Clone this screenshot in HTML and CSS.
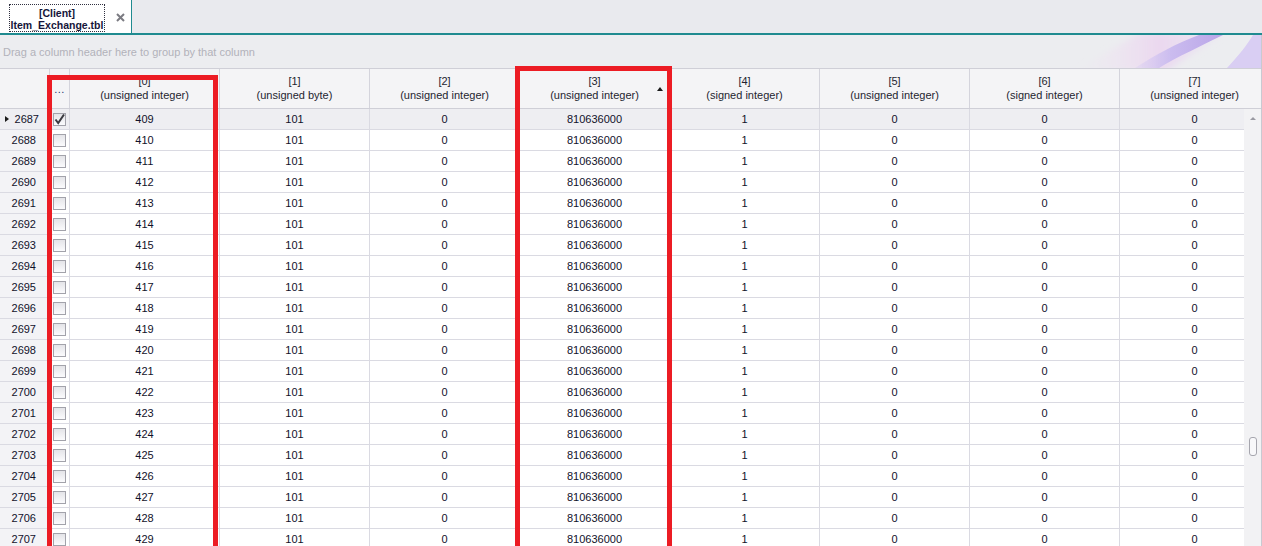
FILE: index.html
```html
<!doctype html>
<html>
<head>
<meta charset="utf-8">
<link rel="stylesheet" href="styles.css">
<title>[Client] Item_Exchange.tbl</title>
</head>
<body>
<div class="tabs">
  <div class="tab">
    <div class="tab-label">[Client]<br>Item_Exchange.tbl</div>
    <svg class="tab-close" width="9" height="9" viewBox="0 0 9 9"><path d="M1 1L8 8M8 1L1 8" stroke="#7b7b82" stroke-width="2"/></svg>
  </div>
</div>

<div class="main">
  <div class="group-panel">
    <span class="group-hint">Drag a column header here to group by that column</span>
    <svg class="swoosh" width="220" height="33" viewBox="0 0 220 33">
      <defs>
        <linearGradient id="pink" x1="0" y1="0" x2="1" y2="0">
          <stop offset="0" stop-color="#f0e6f2" stop-opacity="0"/>
          <stop offset="0.55" stop-color="#ebd8ef"/>
          <stop offset="1" stop-color="#e8dcf3" stop-opacity="0.3"/>
        </linearGradient>
        <linearGradient id="violet" x1="0" y1="0" x2="1" y2="0">
          <stop offset="0" stop-color="#d8ccf3" stop-opacity="0.3"/>
          <stop offset="0.4" stop-color="#cbbcef"/>
          <stop offset="1" stop-color="#b9a5e8"/>
        </linearGradient>
        <filter id="soft" x="-20%" y="-20%" width="140%" height="140%">
          <feGaussianBlur stdDeviation="3"/>
        </filter>
        <filter id="edge" x="-10%" y="-10%" width="120%" height="120%">
          <feGaussianBlur stdDeviation="0.5"/>
        </filter>
      </defs>
      <polygon points="35,36 125,36 185,-3 100,-3" fill="url(#pink)" filter="url(#soft)"/>
      <path d="M94 33C114 20 136 8 158 0L182 0C162 10 136 22 118 33Z" fill="url(#violet)" filter="url(#edge)"/>
      <path d="M186 33C198 20 206 10 212 0L220 0L220 33Z" fill="#d9cef3" filter="url(#edge)"/>
    </svg>
  </div>

  <div class="head">
    <div class="hc"></div>
    <div class="hc hc-dots">...</div>
    <div class="hc">[0]<br>(unsigned integer)</div>
    <div class="hc">[1]<br>(unsigned byte)</div>
    <div class="hc">[2]<br>(unsigned integer)</div>
    <div class="hc hc-sorted">[3]<br>(unsigned integer)<span class="sort-up"></span></div>
    <div class="hc">[4]<br>(signed integer)</div>
    <div class="hc">[5]<br>(unsigned integer)</div>
    <div class="hc">[6]<br>(signed integer)</div>
    <div class="hc">[7]<br>(unsigned integer)</div>
  </div>

  <div class="body">
    <div class="rows">
      <div class="row row-focus">
        <div class="rh rh-focus"><span class="indicator"></span>2687</div>
        <div class="ck"><span class="box box-on"><svg width="13" height="13" viewBox="0 0 13 13"><path d="M2.5 6.5L5.2 10L11 1.5" fill="none" stroke="#3a3a40" stroke-width="2"/></svg></span></div>
        <div class="c">409</div><div class="c">101</div><div class="c">0</div><div class="c">810636000</div><div class="c">1</div><div class="c">0</div><div class="c">0</div><div class="c">0</div>
      </div>
      <div class="row">
        <div class="rh">2688</div><div class="ck"><span class="box"></span></div>
        <div class="c">410</div><div class="c">101</div><div class="c">0</div><div class="c">810636000</div><div class="c">1</div><div class="c">0</div><div class="c">0</div><div class="c">0</div>
      </div>
      <div class="row">
        <div class="rh">2689</div><div class="ck"><span class="box"></span></div>
        <div class="c">411</div><div class="c">101</div><div class="c">0</div><div class="c">810636000</div><div class="c">1</div><div class="c">0</div><div class="c">0</div><div class="c">0</div>
      </div>
      <div class="row">
        <div class="rh">2690</div><div class="ck"><span class="box"></span></div>
        <div class="c">412</div><div class="c">101</div><div class="c">0</div><div class="c">810636000</div><div class="c">1</div><div class="c">0</div><div class="c">0</div><div class="c">0</div>
      </div>
      <div class="row">
        <div class="rh">2691</div><div class="ck"><span class="box"></span></div>
        <div class="c">413</div><div class="c">101</div><div class="c">0</div><div class="c">810636000</div><div class="c">1</div><div class="c">0</div><div class="c">0</div><div class="c">0</div>
      </div>
      <div class="row">
        <div class="rh">2692</div><div class="ck"><span class="box"></span></div>
        <div class="c">414</div><div class="c">101</div><div class="c">0</div><div class="c">810636000</div><div class="c">1</div><div class="c">0</div><div class="c">0</div><div class="c">0</div>
      </div>
      <div class="row">
        <div class="rh">2693</div><div class="ck"><span class="box"></span></div>
        <div class="c">415</div><div class="c">101</div><div class="c">0</div><div class="c">810636000</div><div class="c">1</div><div class="c">0</div><div class="c">0</div><div class="c">0</div>
      </div>
      <div class="row">
        <div class="rh">2694</div><div class="ck"><span class="box"></span></div>
        <div class="c">416</div><div class="c">101</div><div class="c">0</div><div class="c">810636000</div><div class="c">1</div><div class="c">0</div><div class="c">0</div><div class="c">0</div>
      </div>
      <div class="row">
        <div class="rh">2695</div><div class="ck"><span class="box"></span></div>
        <div class="c">417</div><div class="c">101</div><div class="c">0</div><div class="c">810636000</div><div class="c">1</div><div class="c">0</div><div class="c">0</div><div class="c">0</div>
      </div>
      <div class="row">
        <div class="rh">2696</div><div class="ck"><span class="box"></span></div>
        <div class="c">418</div><div class="c">101</div><div class="c">0</div><div class="c">810636000</div><div class="c">1</div><div class="c">0</div><div class="c">0</div><div class="c">0</div>
      </div>
      <div class="row">
        <div class="rh">2697</div><div class="ck"><span class="box"></span></div>
        <div class="c">419</div><div class="c">101</div><div class="c">0</div><div class="c">810636000</div><div class="c">1</div><div class="c">0</div><div class="c">0</div><div class="c">0</div>
      </div>
      <div class="row">
        <div class="rh">2698</div><div class="ck"><span class="box"></span></div>
        <div class="c">420</div><div class="c">101</div><div class="c">0</div><div class="c">810636000</div><div class="c">1</div><div class="c">0</div><div class="c">0</div><div class="c">0</div>
      </div>
      <div class="row">
        <div class="rh">2699</div><div class="ck"><span class="box"></span></div>
        <div class="c">421</div><div class="c">101</div><div class="c">0</div><div class="c">810636000</div><div class="c">1</div><div class="c">0</div><div class="c">0</div><div class="c">0</div>
      </div>
      <div class="row">
        <div class="rh">2700</div><div class="ck"><span class="box"></span></div>
        <div class="c">422</div><div class="c">101</div><div class="c">0</div><div class="c">810636000</div><div class="c">1</div><div class="c">0</div><div class="c">0</div><div class="c">0</div>
      </div>
      <div class="row">
        <div class="rh">2701</div><div class="ck"><span class="box"></span></div>
        <div class="c">423</div><div class="c">101</div><div class="c">0</div><div class="c">810636000</div><div class="c">1</div><div class="c">0</div><div class="c">0</div><div class="c">0</div>
      </div>
      <div class="row">
        <div class="rh">2702</div><div class="ck"><span class="box"></span></div>
        <div class="c">424</div><div class="c">101</div><div class="c">0</div><div class="c">810636000</div><div class="c">1</div><div class="c">0</div><div class="c">0</div><div class="c">0</div>
      </div>
      <div class="row">
        <div class="rh">2703</div><div class="ck"><span class="box"></span></div>
        <div class="c">425</div><div class="c">101</div><div class="c">0</div><div class="c">810636000</div><div class="c">1</div><div class="c">0</div><div class="c">0</div><div class="c">0</div>
      </div>
      <div class="row">
        <div class="rh">2704</div><div class="ck"><span class="box"></span></div>
        <div class="c">426</div><div class="c">101</div><div class="c">0</div><div class="c">810636000</div><div class="c">1</div><div class="c">0</div><div class="c">0</div><div class="c">0</div>
      </div>
      <div class="row">
        <div class="rh">2705</div><div class="ck"><span class="box"></span></div>
        <div class="c">427</div><div class="c">101</div><div class="c">0</div><div class="c">810636000</div><div class="c">1</div><div class="c">0</div><div class="c">0</div><div class="c">0</div>
      </div>
      <div class="row">
        <div class="rh">2706</div><div class="ck"><span class="box"></span></div>
        <div class="c">428</div><div class="c">101</div><div class="c">0</div><div class="c">810636000</div><div class="c">1</div><div class="c">0</div><div class="c">0</div><div class="c">0</div>
      </div>
      <div class="row">
        <div class="rh">2707</div><div class="ck"><span class="box"></span></div>
        <div class="c">429</div><div class="c">101</div><div class="c">0</div><div class="c">810636000</div><div class="c">1</div><div class="c">0</div><div class="c">0</div><div class="c">0</div>
      </div>
    </div>
    <div class="vscroll">
      <span class="vscroll-up"></span>
      <span class="vscroll-thumb"></span>
    </div>
  </div>

  <div class="mark mark-a"></div>
  <div class="mark mark-b"></div>
</div>
</body>
</html>
```

FILE: styles.css
```css
* {
    box-sizing: border-box;
}
body {
    margin: 0;
    width: 1262px;
    height: 546px;
    overflow: hidden;
    font-family: "Liberation Sans", Arial, sans-serif;
    font-size: 11px;
    color: #11112a;
    background: #ffffff;
}

/* document tabs */
.tabs {
    height: 35px;
    background: #e9eaee;
    border-bottom: 2px solid #1f8b90;
}
.tab {
    width: 132px;
    height: 33px;
    background: #ffffff;
    border-right: 1px solid #1f8b90;
    display: flex;
    align-items: flex-start;
    padding: 4px 0 0 9px;
}
.tab-label {
    width: 96px;
    height: 28px;
    border: 1px dotted #303040;
    font-size: 10.5px;
    font-weight: bold;
    line-height: 12px;
    text-align: center;
    color: #15153a;
    padding-top: 2px;
}
.tab-close {
    margin: 9px 0 0 11px;
}

/* group panel + grid */
.main {
    position: relative;
    height: 511px;
    overflow: hidden;
    border-right: 1px solid #c9c9d1;
}
.group-panel {
    height: 33px;
    background: #ecedf0;
    display: flex;
    align-items: center;
    justify-content: space-between;
    padding-left: 3px;
    overflow: hidden;
}
.group-hint {
    color: #b2b2ba;
}
.swoosh {
    display: block;
}

.head {
    display: grid;
    grid-template-columns: 50px 20px repeat(8, 150px);
    height: 41px;
    border-top: 1px solid #cfcfd7;
    border-bottom: 1px solid #cfcfd7;
    background: #f4f4f6;
    overflow: hidden;
}
.hc {
    position: relative;
    border-right: 1px solid #d4d4dc;
    display: flex;
    align-items: center;
    justify-content: center;
    text-align: center;
    line-height: 14px;
    color: #1f1f30;
    padding-bottom: 1px;
}
.hc-dots {
    color: #22346e;
    padding-top: 2px;
    letter-spacing: 0.5px;
}
.sort-up {
    position: absolute;
    right: 6px;
    top: 18px;
    width: 0;
    height: 0;
    border-left: 3.5px solid transparent;
    border-right: 3.5px solid transparent;
    border-bottom: 4px solid #1a1a1a;
}

.body {
    display: flex;
    height: 437px;
}
.rows {
    width: 1244px;
    overflow: hidden;
}
.row {
    display: grid;
    grid-template-columns: 50px 20px repeat(8, 150px);
    height: 21px;
}
.row > div {
    border-right: 1px solid #dadae2;
    border-bottom: 1px solid #dadae2;
    display: flex;
    align-items: center;
    justify-content: center;
}
.row-focus {
    background: #eeeef2;
}
.row > .rh {
    justify-content: flex-end;
    padding-right: 13px;
    background: #f3f3f6;
}
.row > .rh-focus {
    justify-content: space-between;
    padding: 0 10px 0 5px;
    background: #eeeef2;
}
.indicator {
    width: 0;
    height: 0;
    border-top: 3.5px solid transparent;
    border-bottom: 3.5px solid transparent;
    border-left: 4px solid #1a1a1a;
}
.box {
    display: block;
    width: 13px;
    height: 13px;
    border: 1px solid #a2a2aa;
    background: linear-gradient(#e4e4e8, #fbfbfd);
}
.box-on svg {
    display: block;
    margin: -1px 0 0 -1px;
}

.vscroll {
    width: 17px;
    background: #f2f2f4;
    display: flex;
    flex-direction: column;
    align-items: center;
    padding-top: 8px;
}
.vscroll-up {
    width: 0;
    height: 0;
    border-left: 3px solid transparent;
    border-right: 3px solid transparent;
    border-bottom: 3px solid #9a9aa2;
}
.vscroll-thumb {
    margin-top: 317px;
    width: 8px;
    height: 19px;
    border: 1px solid #a6a6ae;
    border-radius: 3px;
    background: #f8f8fa;
}

/* red highlight boxes drawn over the grid */
.mark {
    position: absolute;
    border: 5px solid #ec1c24;
    height: 520px;
}
.mark-a {
    left: 47px;
    top: 40px;
    width: 171px;
}
.mark-b {
    left: 515px;
    top: 31px;
    width: 157px;
}
```
